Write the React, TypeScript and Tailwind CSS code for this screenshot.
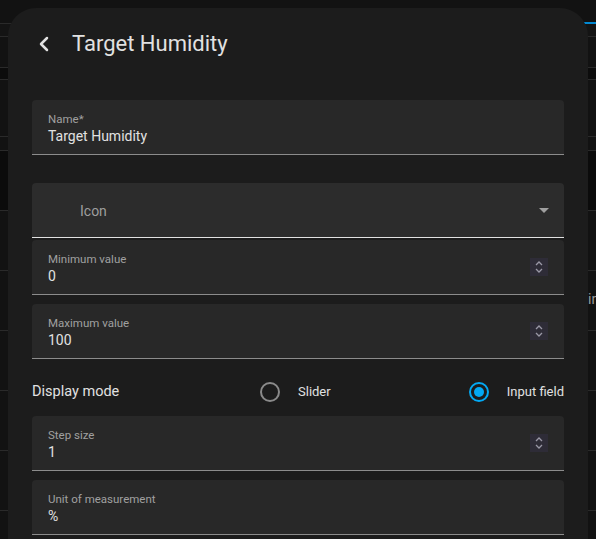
import React from 'react';
import { ChevronLeft } from 'lucide-react';

const bgRows = [
  { h: 'h-[23px]', cls: 'bg-[#121212]' },
  { h: 'h-[13px]', cls: 'bg-[#141414] border-t border-[#2a2a2a]' },
  { h: 'h-[31px]', cls: 'bg-[#121212] border-t border-[#2a2a2a]' },
  { h: 'h-[12px]', cls: 'bg-[#0c0c0c] border-t border-[#2a2a2a]' },
  { h: 'h-[57px]', cls: 'bg-[#121212] border-t border-[#2a2a2a]' },
  { h: 'h-[14px]', cls: 'bg-[#121212] border-t border-[#2a2a2a]' },
  { h: 'h-[60px]', cls: 'bg-[#0b0b0b] border-t border-[#2a2a2a]' },
  { h: 'h-[60px]', cls: 'bg-[#121212] border-t border-[#2a2a2a]' },
  { h: 'h-[60px]', cls: 'bg-[#121212] border-t border-[#2a2a2a]' },
  { h: 'h-[60px]', cls: 'bg-[#121212] border-t border-[#2a2a2a]' },
  { h: 'h-[60px]', cls: 'bg-[#121212] border-t border-[#2a2a2a]' },
  { h: 'h-[60px]', cls: 'bg-[#121212] border-t border-[#2a2a2a]' },
  { h: 'h-[60px]', cls: 'bg-[#121212] border-t border-[#2a2a2a]' },
];

const Spinner = () => (
  <div className="w-[18px] h-[18px] bg-[#2e2c37] flex items-center justify-center">
    <svg width="10" height="14" viewBox="0 0 10 14" fill="none" stroke="#9a98a6" strokeWidth="1.3">
      <path d="M2 5 L5 2 L8 5" />
      <path d="M2 9 L5 12 L8 9" />
    </svg>
  </div>
);

const Field = ({ label, value, spinner }: { label: string; value: string; spinner?: boolean }) => (
  <div className="h-[55px] bg-[#282828] rounded-t-[4px] border-b border-[#8c8c8c] px-4 flex items-center">
    <div className="flex-1 flex flex-col pt-[2px]">
      <span className="text-[11.5px] leading-[14px] text-[#a0a0a0]">{label}</span>
      <span className="text-[14px] leading-[18px] text-[#e1e1e1] mt-[1px]">{value}</span>
    </div>
    {spinner && <Spinner />}
  </div>
);

const Radio = ({ checked }: { checked?: boolean }) =>
  checked ? (
    <div className="w-5 h-5 rounded-full border-2 border-[#03a9f4] flex items-center justify-center">
      <div className="w-[10px] h-[10px] rounded-full bg-[#03a9f4]" />
    </div>
  ) : (
    <div className="w-5 h-5 rounded-full border-2 border-[#8a8a8a]" />
  );

export default function App() {
  return (
    <div className="relative w-[596px] h-[539px] overflow-hidden bg-[#121212] font-['Roboto',sans-serif]">
      {/* page behind the dialog */}
      <div className="flex flex-col">
        {bgRows.map((r, i) => (
          <div key={i} className={`${r.h} ${r.cls}`} />
        ))}
      </div>
      <div className="absolute right-0 top-[22px] w-[12px] h-[2px] bg-[#0288d1]" />
      <span className="absolute left-[588px] top-[289px] text-[14px] text-[#9a9a9a]">in</span>

      {/* dialog */}
      <div className="absolute left-[8px] top-[8px] w-[580px] h-[560px] bg-[#1c1c1c] rounded-t-[28px]">
        <div className="h-[72px] flex items-center pl-[24px]">
          <ChevronLeft className="w-6 h-6 text-[#e1e1e1]" strokeWidth={2.5} />
          <h1 className="ml-[16px] text-[22px] text-[#e1e1e1] leading-none">Target Humidity</h1>
        </div>
        <div className="px-[24px] pt-[20px] flex flex-col">
          <Field label="Name*" value="Target Humidity" />
          <div className="mt-[28px] h-[55px] bg-[#2c2c2c] rounded-t-[4px] border-b border-[#e1e1e1] flex items-center pl-[48px] pr-[15px]">
            <span className="flex-1 text-[14px] text-[#9e9e9e] pt-[2px]">Icon</span>
            <svg width="10" height="5" viewBox="0 0 10 5">
              <path d="M0 0 L10 0 L5 5 Z" fill="#a0a0a0" />
            </svg>
          </div>
          <div className="mt-[2px]">
            <Field label="Minimum value" value="0" spinner />
          </div>
          <div className="mt-[9px]">
            <Field label="Maximum value" value="100" spinner />
          </div>
          <div className="h-[57px] pt-[8px] flex items-center text-[#e1e1e1]">
            <span className="w-[228px] text-[14.5px]">Display mode</span>
            <Radio />
            <span className="ml-[18px] text-[13px] flex-1">Slider</span>
            <Radio checked />
            <span className="ml-[18px] text-[13px]">Input field</span>
          </div>
          <Field label="Step size" value="1" spinner />
          <div className="mt-[9px]">
            <Field label="Unit of measurement" value="%" />
          </div>
        </div>
      </div>
    </div>
  );
}
